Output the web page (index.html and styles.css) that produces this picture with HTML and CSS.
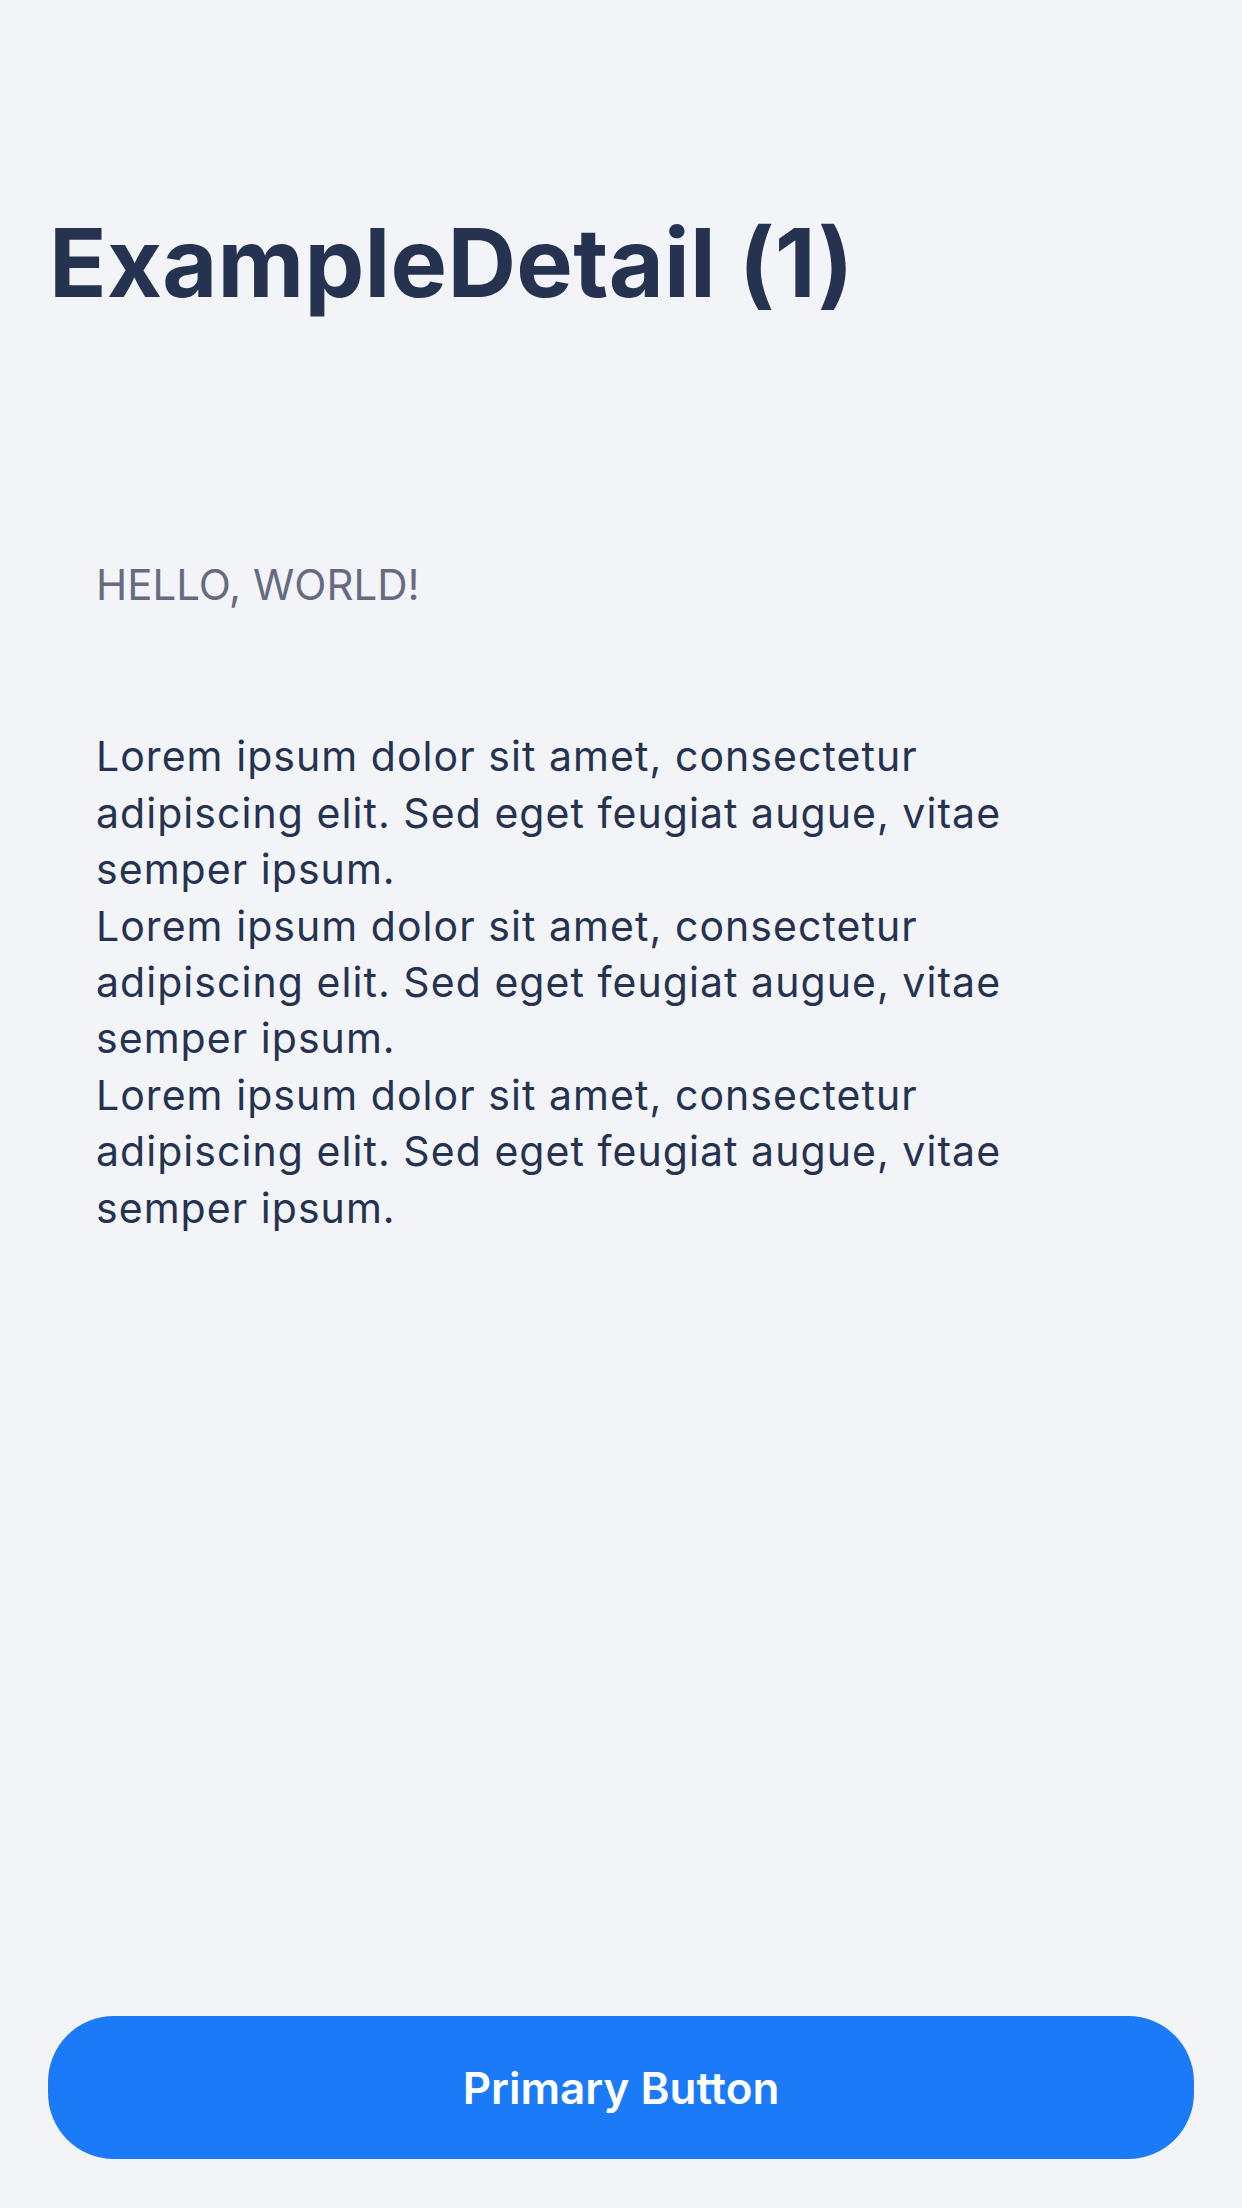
FILE: index.html
```html
<!DOCTYPE html>
<html lang="en">
<head>
<meta charset="utf-8">
<title>ExampleDetail (1)</title>
<link rel="stylesheet" href="styles.css">
</head>
<body>
<main class="screen">
  <header class="header">
    <h1 class="title">ExampleDetail (1)</h1>
  </header>
  <section class="content">
    <p class="eyebrow">HELLO, WORLD!</p>
    <p class="body-text">Lorem ipsum dolor sit amet, consectetur adipiscing elit. Sed eget feugiat augue, vitae semper ipsum.<br>Lorem ipsum dolor sit amet, consectetur adipiscing elit. Sed eget feugiat augue, vitae semper ipsum.<br>Lorem ipsum dolor sit amet, consectetur adipiscing elit. Sed eget feugiat augue, vitae semper ipsum.</p>
  </section>
  <footer class="footer">
    <button class="primary-button" type="button">Primary Button</button>
  </footer>
</main>
</body>
</html>
```
FILE: styles.css
```css
html, body {
  margin: 0;
  padding: 0;
  background: #f2f4f8;
}
body {
  font-family: Inter, "Noto Sans", sans-serif;
  color: #253250;
}
.screen {
  box-sizing: border-box;
  min-height: 2208px;
  display: flex;
  flex-direction: column;
  padding: 206px 48px 49px 48px;
}
.header {
  padding-left: 1px;
}
.title {
  margin: 0;
  font-size: 95px;
  line-height: 1.2;
  font-weight: 700;
  color: #253250;
  letter-spacing: 0.25px;
}
.content {
  display: flex;
  flex-direction: column;
  padding: 0 48px;
  margin-top: 240px;
  gap: 118px;
}
.eyebrow {
  margin: 0;
  font-size: 42px;
  line-height: 1.2;
  font-weight: 400;
  color: #676b80;
}
.body-text {
  margin: 0;
  font-size: 41px;
  line-height: 56.4px;
  font-weight: 400;
  color: #253250;
  letter-spacing: 1.05px;
  max-width: 990px;
}
.footer {
  margin-top: auto;
}
.primary-button {
  display: block;
  width: 100%;
  height: 143px;
  border: 0;
  border-radius: 66px;
  background: #1a7af8;
  color: #ffffff;
  font-family: Inter, "Noto Sans", sans-serif;
  font-size: 44px;
  font-weight: 600;
  cursor: pointer;
}
```
